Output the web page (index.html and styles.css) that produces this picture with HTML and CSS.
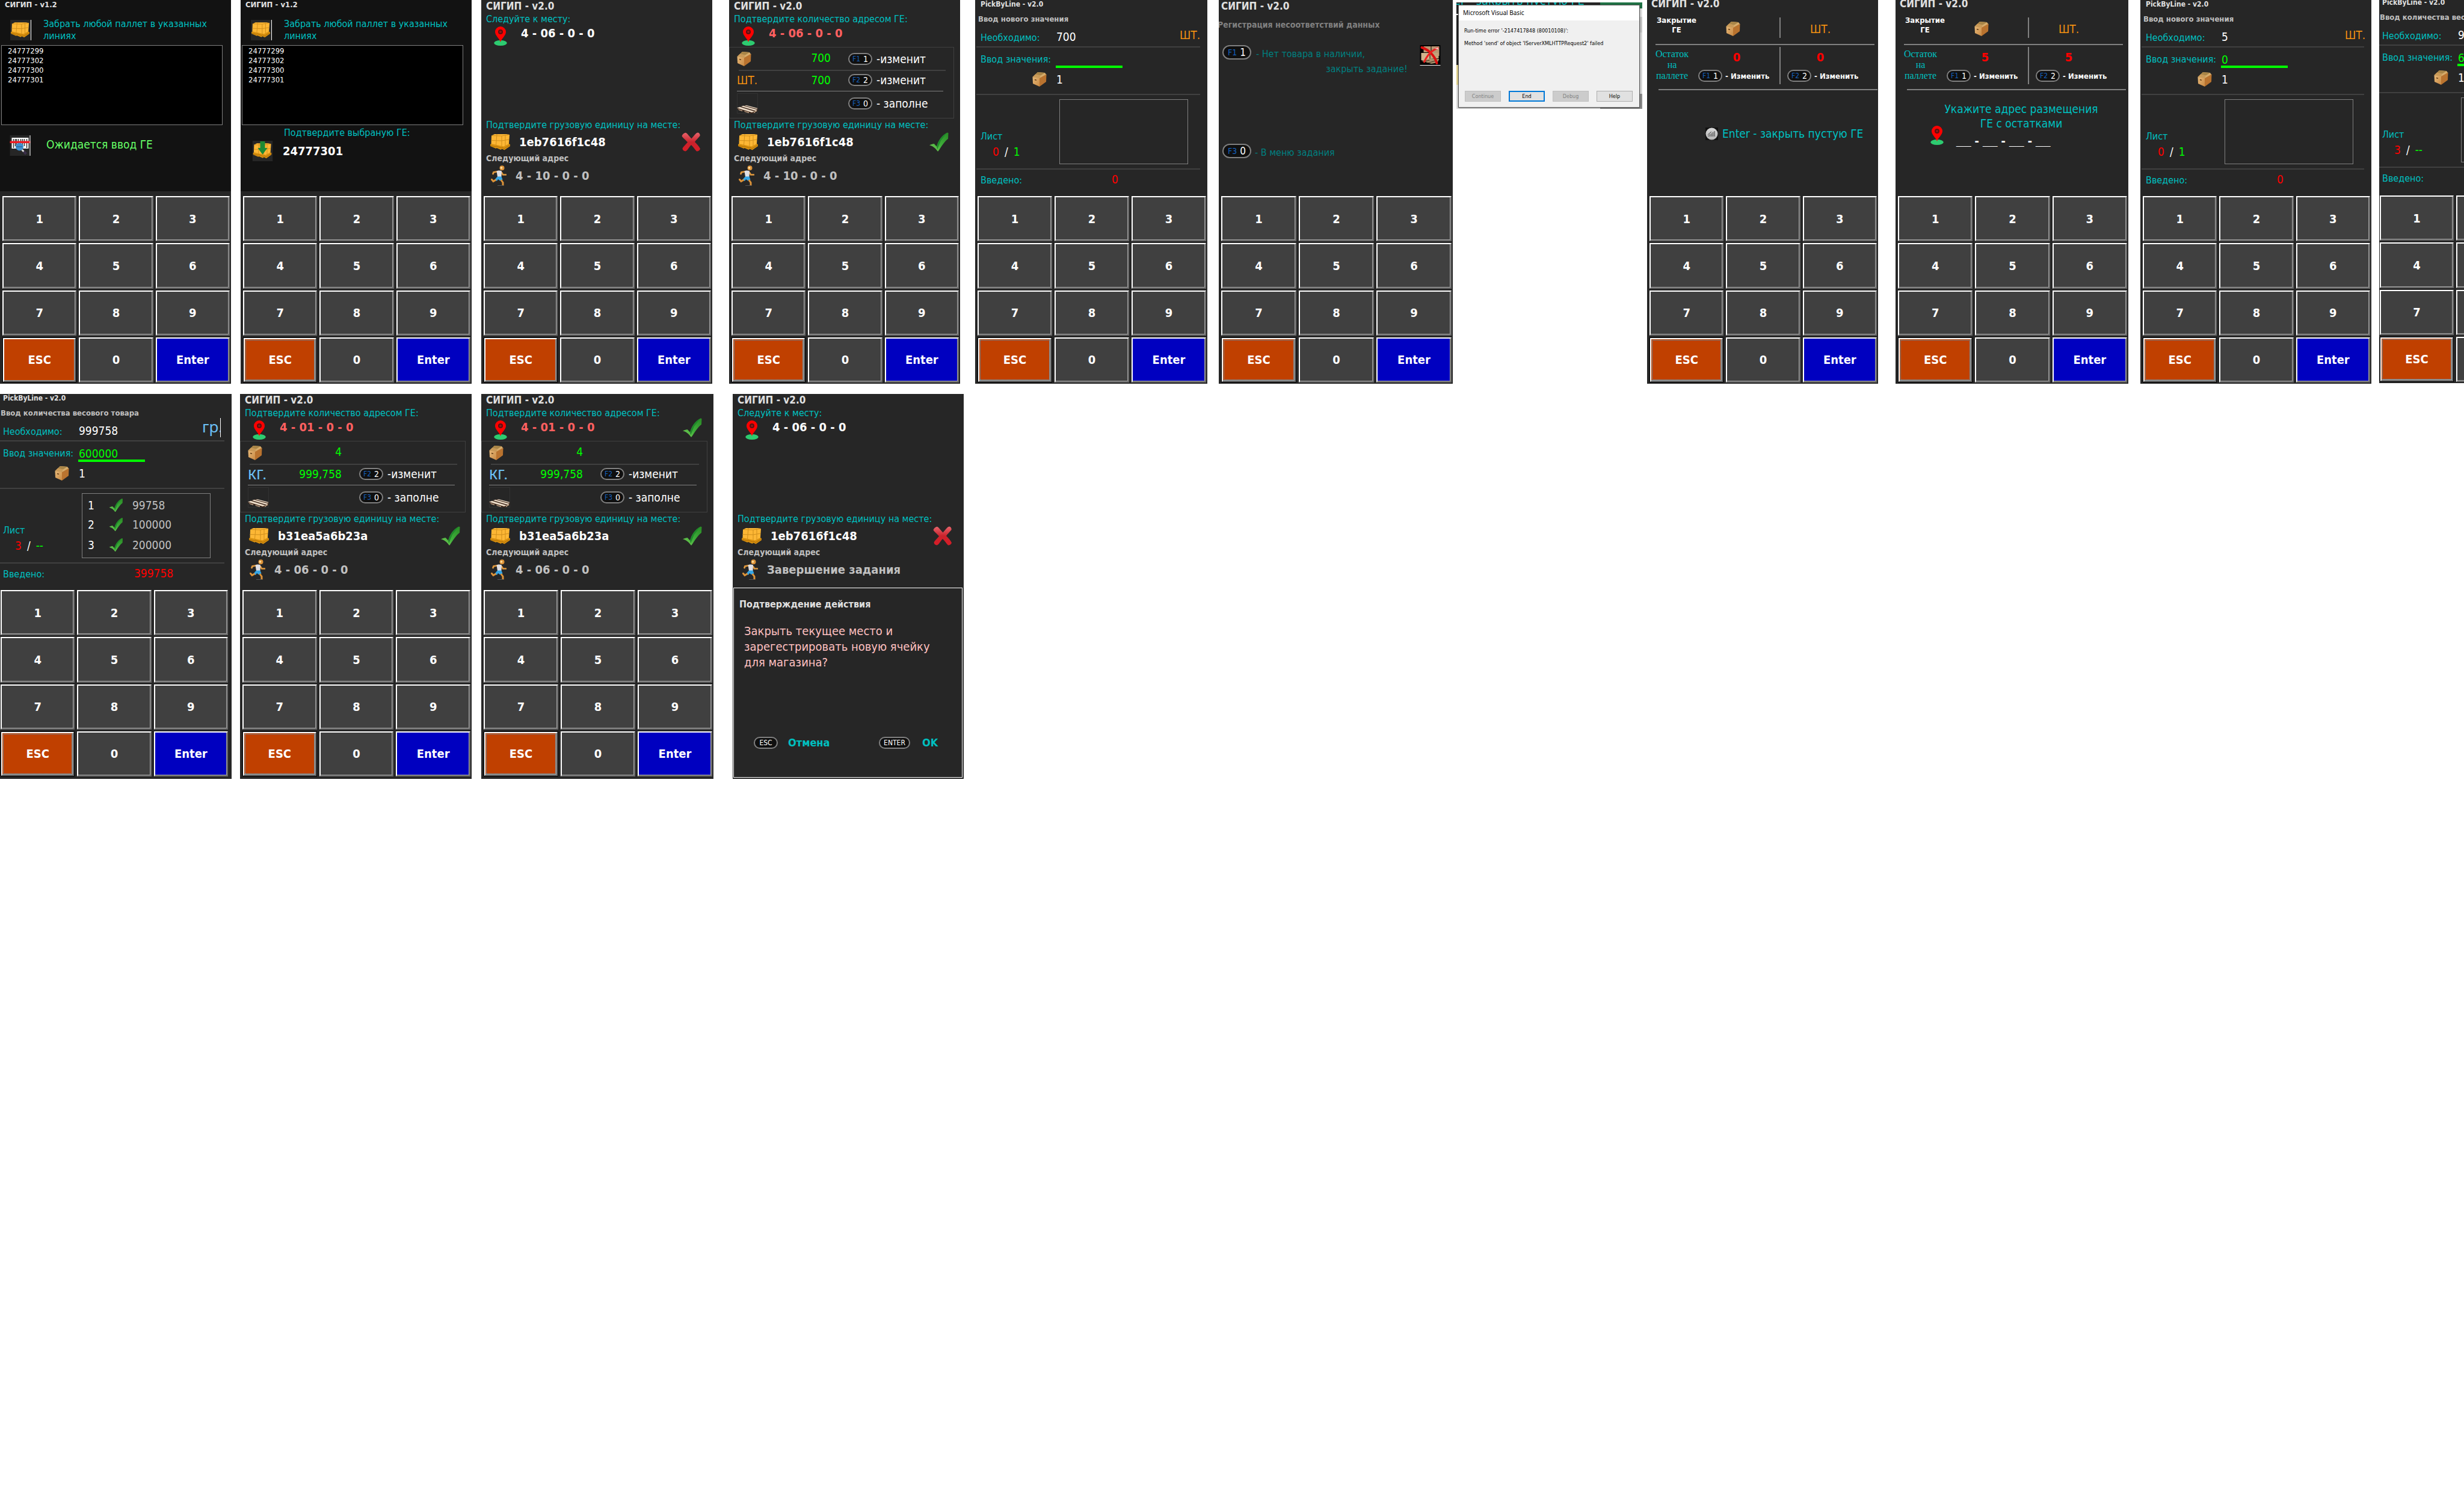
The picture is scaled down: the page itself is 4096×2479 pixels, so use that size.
FILE: index.html
```html
<!DOCTYPE html>
<html lang="ru">
<head>
<meta charset="utf-8">
<title>СИГИП — экраны терминала</title>
<link rel="stylesheet" href="styles.css">
</head>
<body>
<svg class="sprite" width="0" height="0" aria-hidden="true">
  <defs>
    <linearGradient id="g-check" x1="0" y1="1" x2="1" y2="0"><stop offset="0" stop-color="#7fd05a"/><stop offset=".45" stop-color="#3fae3a"/><stop offset="1" stop-color="#2a8a26"/></linearGradient>
    <linearGradient id="g-cross" x1="0" y1="0" x2="0" y2="1"><stop offset="0" stop-color="#e8646c"/><stop offset=".5" stop-color="#c9232c"/><stop offset="1" stop-color="#d81c26"/></linearGradient>
    <linearGradient id="g-box" x1="0" y1="0" x2="1" y2="1"><stop offset="0" stop-color="#e6b878"/><stop offset="1" stop-color="#c98a44"/></linearGradient>
    <linearGradient id="g-ball" x1="0" y1="0" x2="0" y2="1"><stop offset="0" stop-color="#d8d8d8"/><stop offset="1" stop-color="#b4b4b4"/></linearGradient>
    <symbol id="pin" viewBox="0 0 22 32">
      <ellipse cx="11" cy="27.500" rx="10.700" ry="4.500" fill="#2dcb70"/>
      <path d="M11 26C9.500 20.500 2 15 2 9a9 9 0 0 1 18 0c0 6-7.500 11.500-9 17z" fill="#fe0000"/>
      <circle cx="11" cy="9" r="4" fill="#5a1010"/><circle cx="11" cy="9" r="2" fill="#8e1c1c"/>
    </symbol>
    <symbol id="box" viewBox="0 0 24 24">
      <path d="M.500 8 9 0l12 1 2.500 3.500L12 12z" fill="#d6ac6c"/>
      <path d="M.500 8 12 10v14L1 19z" fill="url(#g-box)"/>
      <path d="M12 10 23.500 3.500 23 16l-11 8z" fill="#b9732f"/>
      <path d="M9 0 5 4l9 1.500L21 1z" fill="#a98547"/>
      <path d="M.500 8 5 3.500 14 5.500 12 10z" fill="#c99a58"/>
      <path d="M4 12.500l3 .800" stroke="#5a3510" stroke-width="1.300"/>
    </symbol>
    <symbol id="pallet" viewBox="0 0 33 27">
      <path d="M0 17l5-3 23 1 5 2v3l-9.500 6.500-4-2-2 1.500-7-3-1 1-9.500-4z" fill="#d9910f"/>
      <path d="M0 19l9 2 1-1 8 3 2-1 3 2 10-6" fill="none" stroke="#b06f06"/>
      <path d="M2 2.500 7 0h20l5 1-1 15-9 4.500L1.500 16z" fill="#fdb735"/>
      <path d="M2 2.500 19 3l12-2M19 3v17M1.500 10.500 19 11l12-2M11 0 9.500 18M25 1v18" fill="none" stroke="#d08f1c"/>
    </symbol>
    <symbol id="pallet-tile" viewBox="0 0 34 34">
      <path d="M0 0h34v34H0z" fill="#262626"/>
      <use href="#pallet" x="1" y="4" width="31" height="26"/>
    </symbol>
    <symbol id="pallet-down" viewBox="0 0 34 34">
      <use href="#pallet-tile" width="34" height="34"/>
      <path d="M13 1h8v11h4L17 23 9 12h4z" fill="#1c8a34"/>
    </symbol>
    <symbol id="wood" viewBox="0 0 35 34">
      <path d="M.500.500h34v33H.500z" fill="none" stroke="#323232"/>
      <path d="M0 24.500 13 20l21.500 5v4.500L25 34 1 26.500z" fill="#3a2317"/>
      <path d="M0 24.500 5 22.700l24 7.500L25 32zM7 22l3.500-1.200L34 27.500l-3 1.800zM12.500 20.300 16 20l18.500 5-1.500 1z" fill="#ecdcc8"/>
      <path d="M2 26.500l7 2v1.500l-6-2zM12 29.500l8 2v1.500l-7-2zM28 31l5-2.500v1.500l-5 3z" fill="#c9a98c"/>
    </symbol>
    <symbol id="check" viewBox="0 0 33 32">
      <path d="M0 21.500c3-1.500 6-2.500 8-2.500l4.500 5C15 14 21 5 30.500 0l2 .500-.500 10C26 15 21 23 15 32h-1C10 26 6 23.500 0 21.500z" fill="url(#g-check)"/>
      <path d="M12.500 24C15 14 21 5 30.500 0l-11 14-6 15z" fill="#1f8a2a"/>
    </symbol>
    <symbol id="cross" viewBox="0 0 31 32">
      <path d="M5 1c3-1.500 4 2 11 9.500C21 5 24 0 27 .500c3 1 3.500 4 3 5.500-3 4-7 7-8.500 10 3 3 7 7 9 11.500-1 3-4 4.500-6 4-3-3-6-8-9-10.500C12 24 10 30 6 31.500c-3-.500-5-2-5-5C3 23 7 20 9.500 16.500 6 12 1 9 0 6c1-2.500 3-4.500 5-5z" fill="url(#g-cross)"/>
    </symbol>
    <symbol id="runner" viewBox="0 0 26 34">
      <circle cx="18.500" cy="4.200" r="4" fill="#dc9238"/><circle cx="17.500" cy="4" r="1.800" fill="#ffe0a0"/>
      <path d="M12 10 4.500 11.500 3.500 14" fill="none" stroke="#e0993f" stroke-width="2.800" stroke-linecap="round"/>
      <path d="M18 12l2 3.500h5" fill="none" stroke="#e0993f" stroke-width="2.600" stroke-linecap="round"/>
      <path d="M9.500 9.500c3-1.500 6-1.500 8.500 0l-.500 9.500h-6.500z" fill="#dfdfe4"/>
      <path d="M11 18.500h6.500l2 5-4.500 2-3-2.500-2 3-4-2z" fill="#35a6e6"/>
      <path d="M7.500 24.500 4 26.500l-2.500-3M17.500 25l2.500 3.500V33" fill="none" stroke="#dc9238" stroke-width="3" stroke-linecap="round"/>
      <path d="M11 33.500h10" stroke="#555"/>
    </symbol>
    <symbol id="scan" viewBox="0 0 34 34">
      <path d="M0 0h34v34H0z" fill="#262626"/><path d="M3 4h28v18H3z" fill="#fff"/>
      <path d="M6 6v15M9 6v12M11 6v12M14 6v12M18 6v12M21 6v12M24 6v12M28 6v15" stroke="#333" stroke-width="1.500"/>
      <path d="M0 9.500h34v3.500H0z" fill="#ee1c24"/>
      <circle cx="16" cy="19" r="6.500" fill="#3d8fd0"/><path d="M11 19h10" stroke="#123" stroke-dasharray="1 1"/>
      <path d="M20 24l3 3" stroke="#ddd" stroke-width="3"/><path d="M23 27l4 4" stroke="#3b2f4a" stroke-width="4"/>
      <path d="M33.500 0v34" stroke="#fff"/>
    </symbol>
    <symbol id="no-stock" viewBox="0 0 34 34">
      <path d="M0 0h34v34H0z"/>
      <path d="M6 2h12v10H6zM19 2h13v16H19z" fill="#b99773"/><path d="M2 13h14v12H2z" fill="#d1b48d"/>
      <path d="M17 13h14v9H17z" fill="#c4a27a"/>
      <path d="M2 26l16-4 14 1-3 6-10 2z" fill="#a8906c"/><path d="M4 28l12-3M12 30l14-4" stroke="#3a2a18"/>
      <path d="M3 4c10 3 21 12 25 26" fill="none" stroke="#dd1010" stroke-width="4" stroke-linecap="round"/>
      <path d="M30 5C20 8 12 17 7 28" fill="none" stroke="#ee2020" stroke-width="3" stroke-linecap="round"/>
      <path d="M24 6l6-2 1 3z" fill="#fbd0d0"/>
      <path d="M0 33.500h34" stroke="#fff"/>
    </symbol>
    <symbol id="ball" viewBox="0 0 21 21">
      <path d="M0 0h21v21H0z" fill="#111"/><circle cx="10.500" cy="10.500" r="10" fill="url(#g-ball)"/>
      <path d="M5 15v-2M7.500 15v-4M10 15V9.500M12.500 15V7.500M15 15V6M4 12l6-5" fill="none" stroke="#333"/>
    </symbol>
  </defs>
</svg>

<main class="board">
  <div class="strip strip-top">

    <section class="screen">
      <div class="dark">
        <h2 class="title title-small">СИГИП - v1.2</h2>
        <div class="task"><svg class="i-tile lined"><use href="#pallet-tile"/></svg><p>Забрать любой паллет в указанных линиях</p></div>
        <ul class="codes"><li>24777299</li><li>24777302</li><li>24777300</li><li>24777301</li></ul>
        <div class="wait"><svg class="i-tile"><use href="#scan"/></svg><p>Ожидается ввод ГЕ</p></div>
      </div>
      <div class="keypad"><button>1</button><button>2</button><button>3</button><button>4</button><button>5</button><button>6</button><button>7</button><button>8</button><button>9</button><button class="esc">ESC</button><button>0</button><button class="enter">Enter</button></div>
    </section>

    <section class="screen">
      <div class="dark">
        <h2 class="title title-small">СИГИП - v1.2</h2>
        <div class="task"><svg class="i-tile lined"><use href="#pallet-tile"/></svg><p>Забрать любой паллет в указанных линиях</p></div>
        <ul class="codes"><li>24777299</li><li>24777302</li><li>24777300</li><li>24777301</li></ul>
        <p class="picked-label">Подтвердите выбраную ГЕ:</p>
        <div class="picked"><svg class="i-tile"><use href="#pallet-down"/></svg><strong class="big">24777301</strong></div>
      </div>
      <div class="keypad"><button>1</button><button>2</button><button>3</button><button>4</button><button>5</button><button>6</button><button>7</button><button>8</button><button>9</button><button class="esc focus">ESC</button><button>0</button><button class="enter">Enter</button></div>
    </section>

    <section class="screen">
      <h2 class="title">СИГИП - v2.0</h2>
      <p class="hint">Следуйте к месту:</p>
      <div class="address"><svg class="i-pin"><use href="#pin"/></svg><strong class="big">4 - 06 - 0 - 0</strong></div>
      <div class="blank"></div>
      <p class="hint unit-hint">Подтвердите грузовую единицу на месте:</p>
      <div class="unit"><svg class="i-pallet"><use href="#pallet"/></svg><strong class="big">1eb7616f1c48</strong><svg class="i-mark"><use href="#cross"/></svg></div>
      <p class="next-label">Следующий адрес</p>
      <div class="next"><svg class="i-run"><use href="#runner"/></svg><strong class="big">4 - 10 - 0 - 0</strong></div>
      <div class="keypad"><button>1</button><button>2</button><button>3</button><button>4</button><button>5</button><button>6</button><button>7</button><button>8</button><button>9</button><button class="esc">ESC</button><button>0</button><button class="enter">Enter</button></div>
    </section>

    <section class="screen">
      <h2 class="title">СИГИП - v2.0</h2>
      <p class="hint">Подтвердите количество адресом ГЕ:</p>
      <div class="address wrong"><svg class="i-pin"><use href="#pin"/></svg><strong class="big">4 - 06 - 0 - 0</strong></div>
      <div class="amounts">
        <div class="amount first"><svg class="i-box"><use href="#box"/></svg><span class="qty">700</span><button class="fkey"><b>F1</b>1</button><span class="act">-изменит</span></div>
        <hr class="dim">
        <div class="amount second"><span class="pcs">ШТ.</span><span class="qty">700</span><button class="fkey"><b>F2</b>2</button><span class="act">-изменит</span></div>
        <hr class="light">
        <div class="amount third"><svg class="i-wood"><use href="#wood"/></svg><span class="qty"></span><button class="fkey"><b>F3</b>0</button><span class="act">- заполне</span></div>
      </div>
      <p class="hint unit-hint">Подтвердите грузовую единицу на месте:</p>
      <div class="unit"><svg class="i-pallet"><use href="#pallet"/></svg><strong class="big">1eb7616f1c48</strong><svg class="i-mark"><use href="#check"/></svg></div>
      <p class="next-label">Следующий адрес</p>
      <div class="next"><svg class="i-run"><use href="#runner"/></svg><strong class="big">4 - 10 - 0 - 0</strong></div>
      <div class="keypad"><button>1</button><button>2</button><button>3</button><button>4</button><button>5</button><button>6</button><button>7</button><button>8</button><button>9</button><button class="esc focus">ESC</button><button>0</button><button class="enter">Enter</button></div>
    </section>

    <section class="screen">
      <div class="pick">
        <h2 class="pick-title">PickByLine - v2.0</h2>
        <p class="pick-sub">Ввод нового значения</p>
        <div class="need"><span>Необходимо:</span><span class="val">700</span><span class="pcs">ШТ.</span></div>
        <hr>
        <div class="entry"><label for="value-a">Ввод значения:</label><input id="value-a" type="text" value=""></div>
        <div class="boxes"><svg class="i-box"><use href="#box"/></svg><span>1</span></div>
        <hr>
        <div class="sheet"><div class="sheet-no"><span>Лист</span><p><span class="red">0</span> / <span class="lime">1</span></p></div><div class="frame"></div></div>
        <hr>
        <div class="total"><span>Введено:</span><span class="sum">0</span></div>
      </div>
      <div class="keypad"><button>1</button><button>2</button><button>3</button><button>4</button><button>5</button><button>6</button><button>7</button><button>8</button><button>9</button><button class="esc focus">ESC</button><button>0</button><button class="enter">Enter</button></div>
    </section>

    <section class="screen">
      <h2 class="title title-left">СИГИП - v2.0</h2>
      <p class="mismatch">Регистрация несоответствий данных</p>
      <div class="option"><button class="fkey large"><b>F1</b>1</button><p>- Нет товара в наличии,<span>закрыть задание!</span></p><svg class="i-tile"><use href="#no-stock"/></svg></div>
      <div class="option option-menu"><button class="fkey large"><b>F3</b>0</button><p>- В меню задания</p></div>
      <div class="keypad"><button>1</button><button>2</button><button>3</button><button>4</button><button>5</button><button>6</button><button>7</button><button>8</button><button>9</button><button class="esc focus">ESC</button><button>0</button><button class="enter">Enter</button></div>
    </section>

    <section class="desktop">
      <p class="behind">er - закрыть пустую ГЕ</p>
      <div class="msgbox">
        <h2>Microsoft Visual Basic</h2>
        <p>Run-time error '-2147417848 (80010108)':</p>
        <p>Method 'send' of object 'IServerXMLHTTPRequest2' failed</p>
        <div class="msg-buttons"><button disabled>Continue</button><button class="default">End</button><button disabled>Debug</button><button>Help</button></div>
      </div>
    </section>

    <section class="screen">
      <h2 class="title title-cut">СИГИП - v2.0</h2>
      <div class="close-head"><p>Закрытие<br>ГЕ</p><div class="cell ruled"><svg class="i-box"><use href="#box"/></svg></div><div class="cell"><span class="pcs">ШТ.</span></div></div>
      <hr class="close-line">
      <div class="rest"><p>Остаток<br>на<br>паллете</p>
        <div class="cell ruled"><strong>0</strong><div class="change"><button class="fkey"><b>F1</b>1</button><span>- Изменить</span></div></div>
        <div class="cell"><strong>0</strong><div class="change"><button class="fkey"><b>F2</b>2</button><span>- Изменить</span></div></div></div>
      <hr class="close-line late">
      <div class="close-empty"><svg class="i-ball"><use href="#ball"/></svg><span>Enter - закрыть пустую ГЕ</span></div>
      <div class="keypad"><button>1</button><button>2</button><button>3</button><button>4</button><button>5</button><button>6</button><button>7</button><button>8</button><button>9</button><button class="esc focus">ESC</button><button>0</button><button class="enter">Enter</button></div>
    </section>

    <section class="screen">
      <h2 class="title title-cut">СИГИП - v2.0</h2>
      <div class="close-head"><p>Закрытие<br>ГЕ</p><div class="cell ruled"><svg class="i-box"><use href="#box"/></svg></div><div class="cell"><span class="pcs">ШТ.</span></div></div>
      <hr class="close-line">
      <div class="rest"><p>Остаток<br>на<br>паллете</p>
        <div class="cell ruled"><strong>5</strong><div class="change"><button class="fkey"><b>F1</b>1</button><span>- Изменить</span></div></div>
        <div class="cell"><strong>5</strong><div class="change"><button class="fkey"><b>F2</b>2</button><span>- Изменить</span></div></div></div>
      <hr class="close-line late">
      <div class="place"><svg class="i-pin"><use href="#pin"/></svg><div><p>Укажите адрес размещения<br>ГЕ с остатками</p><strong>__ - __ - __ - __</strong></div></div>
      <div class="keypad"><button>1</button><button>2</button><button>3</button><button>4</button><button>5</button><button>6</button><button>7</button><button>8</button><button>9</button><button class="esc focus">ESC</button><button>0</button><button class="enter">Enter</button></div>
    </section>

    <section class="screen">
      <div class="pick">
        <h2 class="pick-title">PickByLine - v2.0</h2>
        <p class="pick-sub">Ввод нового значения</p>
        <div class="need"><span>Необходимо:</span><span class="val">5</span><span class="pcs">ШТ.</span></div>
        <hr>
        <div class="entry"><label for="value-b">Ввод значения:</label><input id="value-b" type="text" value="0"></div>
        <div class="boxes"><svg class="i-box"><use href="#box"/></svg><span>1</span></div>
        <hr>
        <div class="sheet"><div class="sheet-no"><span>Лист</span><p><span class="red">0</span> / <span class="lime">1</span></p></div><div class="frame"></div></div>
        <hr>
        <div class="total"><span>Введено:</span><span class="sum">0</span></div>
      </div>
      <div class="keypad"><button>1</button><button>2</button><button>3</button><button>4</button><button>5</button><button>6</button><button>7</button><button>8</button><button>9</button><button class="esc focus">ESC</button><button>0</button><button class="enter">Enter</button></div>
    </section>

    <section class="screen raised">
      <div class="pick weight">
        <h2 class="pick-title">PickByLine - v2.0</h2>
        <p class="pick-sub">Ввод количества весового товара</p>
        <div class="need"><span>Необходимо:</span><span class="val">999758</span><span class="gram">гр.</span></div>
        <hr>
        <div class="entry"><label for="value-c">Ввод значения:</label><input id="value-c" type="text" value="600000"></div>
        <div class="boxes"><svg class="i-box"><use href="#box"/></svg><span>1</span></div>
        <hr>
        <div class="sheet"><div class="sheet-no"><span>Лист</span><p><span class="red">3</span> / <span class="lime">--</span></p></div><div class="frame"></div></div>
        <hr>
        <div class="total"><span>Введено:</span><span class="sum">399758</span></div>
      </div>
      <div class="keypad"><button>1</button><button>2</button><button>3</button><button>4</button><button>5</button><button>6</button><button>7</button><button>8</button><button>9</button><button class="esc focus">ESC</button><button>0</button><button class="enter">Enter</button></div>
    </section>
  </div>

  <div class="strip strip-bottom">
    <section class="screen">
      <div class="pick weight">
        <h2 class="pick-title">PickByLine - v2.0</h2>
        <p class="pick-sub">Ввод количества весового товара</p>
        <div class="need"><span>Необходимо:</span><span class="val">999758</span><span class="gram">гр.</span></div>
        <hr>
        <div class="entry"><label for="value-d">Ввод значения:</label><input id="value-d" type="text" value="600000"></div>
        <div class="boxes"><svg class="i-box"><use href="#box"/></svg><span>1</span></div>
        <hr>
        <div class="sheet"><div class="sheet-no"><span>Лист</span><p><span class="red">3</span> / <span class="lime">--</span></p></div>
          <div class="frame"><span>1</span><svg><use href="#check"/></svg><em>99758</em><span>2</span><svg><use href="#check"/></svg><em>100000</em><span>3</span><svg><use href="#check"/></svg><em>200000</em></div></div>
        <hr>
        <div class="total"><span>Введено:</span><span class="sum">399758</span></div>
      </div>
      <div class="keypad"><button>1</button><button>2</button><button>3</button><button>4</button><button>5</button><button>6</button><button>7</button><button>8</button><button>9</button><button class="esc focus">ESC</button><button>0</button><button class="enter">Enter</button></div>
    </section>

    <section class="screen">
      <h2 class="title">СИГИП - v2.0</h2>
      <p class="hint">Подтвердите количество адресом ГЕ:</p>
      <div class="address wrong"><svg class="i-pin"><use href="#pin"/></svg><strong class="big">4 - 01 - 0 - 0</strong></div>
      <div class="amounts">
        <div class="amount first"><svg class="i-box"><use href="#box"/></svg><span class="qty">4</span></div>
        <hr class="dim">
        <div class="amount second"><span class="kg">КГ.</span><span class="qty">999,758</span><button class="fkey"><b>F2</b>2</button><span class="act">-изменит</span></div>
        <hr class="light">
        <div class="amount third"><svg class="i-wood"><use href="#wood"/></svg><span class="qty"></span><button class="fkey"><b>F3</b>0</button><span class="act">- заполне</span></div>
      </div>
      <p class="hint unit-hint">Подтвердите грузовую единицу на месте:</p>
      <div class="unit"><svg class="i-pallet"><use href="#pallet"/></svg><strong class="big">b31ea5a6b23a</strong><svg class="i-mark"><use href="#check"/></svg></div>
      <p class="next-label">Следующий адрес</p>
      <div class="next"><svg class="i-run"><use href="#runner"/></svg><strong class="big">4 - 06 - 0 - 0</strong></div>
      <div class="keypad"><button>1</button><button>2</button><button>3</button><button>4</button><button>5</button><button>6</button><button>7</button><button>8</button><button>9</button><button class="esc focus">ESC</button><button>0</button><button class="enter">Enter</button></div>
    </section>

    <section class="screen">
      <h2 class="title">СИГИП - v2.0</h2>
      <p class="hint">Подтвердите количество адресом ГЕ:</p>
      <div class="address wrong"><svg class="i-pin"><use href="#pin"/></svg><strong class="big">4 - 01 - 0 - 0</strong><svg class="i-mark"><use href="#check"/></svg></div>
      <div class="amounts">
        <div class="amount first"><svg class="i-box"><use href="#box"/></svg><span class="qty">4</span></div>
        <hr class="dim">
        <div class="amount second"><span class="kg">КГ.</span><span class="qty">999,758</span><button class="fkey"><b>F2</b>2</button><span class="act">-изменит</span></div>
        <hr class="light">
        <div class="amount third"><svg class="i-wood"><use href="#wood"/></svg><span class="qty"></span><button class="fkey"><b>F3</b>0</button><span class="act">- заполне</span></div>
      </div>
      <p class="hint unit-hint">Подтвердите грузовую единицу на месте:</p>
      <div class="unit"><svg class="i-pallet"><use href="#pallet"/></svg><strong class="big">b31ea5a6b23a</strong><svg class="i-mark"><use href="#check"/></svg></div>
      <p class="next-label">Следующий адрес</p>
      <div class="next"><svg class="i-run"><use href="#runner"/></svg><strong class="big">4 - 06 - 0 - 0</strong></div>
      <div class="keypad"><button>1</button><button>2</button><button>3</button><button>4</button><button>5</button><button>6</button><button>7</button><button>8</button><button>9</button><button class="esc focus">ESC</button><button>0</button><button class="enter">Enter</button></div>
    </section>

    <section class="screen">
      <h2 class="title">СИГИП - v2.0</h2>
      <p class="hint">Следуйте к месту:</p>
      <div class="address"><svg class="i-pin"><use href="#pin"/></svg><strong class="big">4 - 06 - 0 - 0</strong></div>
      <div class="blank"></div>
      <p class="hint unit-hint">Подтвердите грузовую единицу на месте:</p>
      <div class="unit"><svg class="i-pallet"><use href="#pallet"/></svg><strong class="big">1eb7616f1c48</strong><svg class="i-mark"><use href="#cross"/></svg></div>
      <p class="next-label">Следующий адрес</p>
      <div class="next"><svg class="i-run"><use href="#runner"/></svg><strong class="big">Завершение задания</strong></div>
      <div class="confirm">
        <h3>Подтверждение действия</h3>
        <p>Закрыть текущее место и зарегестрировать новую ячейку для магазина?</p>
        <div class="answers"><button class="fkey">ESC</button><span>Отмена</span><button class="fkey wide">ENTER</button><span>OK</span></div>
      </div>
    </section>
  </div>
</main>
</body>
</html>
```
FILE: styles.css
```css
* { box-sizing: border-box; }
body, h2, h3, p, ul { margin: 0; padding: 0; }
body {
  background: #fff;
  overflow-x: hidden;
  font-family: "DejaVu Sans Condensed", "DejaVu Sans", "Noto Sans", sans-serif;
  font-size: 16px;
}
button { font-family: inherit; padding: 0; margin: 0; }
svg { display: block; flex: none; }
.sprite { position: absolute; }

.board { display: grid; gap: 15px; }
.strip { display: flex; align-items: flex-start; overflow: hidden; height: 640px; }
.strip-top { gap: 16px; }
.strip-bottom { gap: 14px; }

/* one handheld screen */
.screen {
  flex: none;
  width: 384px;
  height: 638px;
  display: flex;
  flex-direction: column;
  overflow: hidden;
  background: #262626;
  color: #fff;
}
.strip-top .screen:nth-child(4) { margin-left: 12px; }
.strip-top .screen:nth-child(5) { margin-left: 9px; width: 386px; }
.strip-top .screen:nth-child(6) { margin-left: 3px; width: 389px; }
.desktop { margin-left: -10px; }
.strip-top .screen:nth-child(8) { margin-left: -8px; }
.strip-top .screen:nth-child(9) { margin-left: 13px; width: 387px; }
.strip-top .screen:nth-child(10) { margin-left: 4px; }
.strip-top .screen:nth-child(11) { margin-left: -3px; }
.strip-top .raised { margin-top: -3px; height: 640px; }
.strip-bottom .screen { width: 385px; height: 640px; padding-bottom: 2px; }
.strip-bottom .screen:nth-child(3) { margin-left: 2px; width: 386px; }
.strip-bottom .screen:nth-child(4) { margin-left: 18px; width: 384px; }

/* icons */
.i-tile { width: 35px; height: 34px; }
.i-tile.lined { border-right: 1px solid #fff; }
.i-pin { width: 22px; height: 32px; }
.i-box { width: 24px; height: 24px; }
.i-pallet { width: 33px; height: 27px; }
.i-wood { width: 35px; height: 34px; }
.i-mark { width: 32px; height: 32px; }
.i-run { width: 26px; height: 34px; }
.i-ball { width: 21px; height: 21px; }

/* shared text */
.title { font-size: 17px; line-height: 20px; padding-left: 8px; color: #e0e0e0; }
.title-small { font-size: 13px; line-height: 16px; }
.title-left { padding-left: 4px; }
.title-cut { padding-left: 7px; line-height: 12px; }
.hint { font-size: 16px; line-height: 24px; padding-left: 8px; color: #00c0c0; white-space: nowrap; }
.unit-hint { line-height: 22px; }
.big { font-size: 20px; line-height: 22px; }
.pcs { font-size: 19px; line-height: 16px; color: #f29111; }
.red { color: #f00; }
.lime { color: #0f0; }

/* keypad */
.keypad {
  flex: none;
  height: 310px;
  margin: auto 2px 2px 4px;
  display: grid;
  grid-template: repeat(4, 1fr) / repeat(3, 1fr);
  gap: 3px 4px;
}
.keypad button {
  border: 2px solid;
  border-color: #fff #696969 #696969 #fff;
  box-shadow: inset -1px -1px #a0a0a0;
  background: #404040;
  color: #fff;
  font-size: 20px;
  font-weight: bold;
}
.keypad .esc { background: #c04000; outline: 1px solid #000; outline-offset: -1px; border-width: 3px; }
.keypad .focus { background: #c04000 padding-box; position: relative; }
.keypad .focus::after { content: ""; position: absolute; inset: 1px; border: 1px dotted #3fbfff; }
.keypad .enter { background: #0000c0; }
.weight + .keypad { margin-left: 1px; margin-right: 6px; }

/* function key badge */
.fkey {
  width: 40px;
  height: 20px;
  border: 2px solid #808080;
  border-radius: 10px;
  background: #0f0f0f;
  color: #fff;
  font-size: 14px;
  line-height: 16px;
  display: flex;
  justify-content: center;
  align-items: center;
  gap: 5px;
}
.fkey b { font-size: 12px; font-weight: normal; color: #1560bd; }
.fkey.large { width: 48px; height: 24px; border-radius: 12px; font-size: 17px; flex: none; }
.fkey.large b { font-size: 14px; }
.fkey.wide { width: 52px; }

/* unit selection */
.dark { height: 318px; background: #121212; }
.task { display: flex; align-items: flex-start; gap: 20px; margin-top: 14px; padding-left: 17px; height: 45px; }
.task svg { margin-top: 3px; }
.task p { width: 290px; line-height: 20px; color: #00c0c0; }
.codes {
  list-style: none;
  height: 133px;
  margin: 0 14px 0 2px;
  padding: 1px 0 0 10px;
  border: 1px solid #808080;
  background: #000;
  font-size: 13px;
  line-height: 16px;
}
.wait { display: flex; gap: 26px; margin-top: 17px; padding-left: 16px; color: #6f6; font-size: 19px; line-height: 30px; }
.picked-label { line-height: 22px; margin-top: 2px; padding-left: 72px; color: #00c0c0; }
.picked { display: flex; align-items: center; gap: 16px; margin-top: 2px; padding-left: 19px; }

/* address and unit check */
.address { display: flex; gap: 23px; height: 34px; padding-left: 21px; }
.address.wrong { color: #ff6060; }
.address .i-mark, .unit .i-mark { margin-left: auto; margin-right: 19px; }
.address .i-mark { margin-top: -4px; }
.blank { height: 119px; }
.unit { display: flex; align-items: center; gap: 15px; height: 34px; padding-left: 15px; }
.next-label { font-size: 14px; font-weight: bold; line-height: 20px; padding-left: 8px; color: #c0c0c0; }
.next { display: flex; align-items: center; gap: 15px; height: 40px; padding: 0 0 2px 16px; color: #c0c0c0; }

.amounts { height: 119px; margin-right: 10px; border: 1px solid #404040; }
.amounts hr { margin: 0; border: 0; }
.amounts .dim { height: 2px; margin: 0 13px 0 15px; background: #404040; }
.amounts .light { height: 1px; margin: 0 17px 0 12px; background: #808080; }
.amount { display: grid; grid-template-columns: 36px 120px 69px 1fr; align-items: center; padding-left: 12px; }
.amount.first { height: 37px; }
.amount.first .qty { padding-bottom: 3px; }
.amount.second { height: 33px; padding-bottom: 3px; }
.amount.third { height: 44px; padding-bottom: 4px; }
.qty { font-size: 19px; line-height: 20px; text-align: right; color: #0f0; }
.amount .fkey { justify-self: end; }
.act { padding-left: 7px; font-size: 19px; line-height: 20px; white-space: nowrap; }
.kg { font-family: "Noto Sans", sans-serif; font-size: 22px; font-weight: 500; line-height: 24px; color: #6cc0f5; }

/* quantity entry */
.pick { color: #00c0c0; }
.pick.weight { margin-left: -4px; }
.pick-title { font-size: 12px; line-height: 14px; padding-left: 9px; color: #e0e0e0; }
.pick-sub { font-size: 13px; font-weight: bold; line-height: 36px; padding-left: 5px; color: #c0c0c0; }
.pick hr { height: 2px; margin: 0 12px 0 2px; border: 0; background: #404040; }
.need { display: grid; grid-template-columns: 126px 205px 1fr; align-items: baseline; height: 27px; padding-left: 9px; line-height: 23px; }
.need .val { font-size: 19px; color: #fff; }
.need .pcs { align-self: start; line-height: 16px; }
.gram {
  align-self: start;
  width: 31px;
  height: 32px;
  margin-top: -10px;
  border-right: 1px solid #fff;
  overflow: hidden;
  font: 26px/28px "Noto Sans", sans-serif;
  color: #6cc0f5;
}
.entry { display: flex; height: 34px; padding-left: 9px; }
.entry label { width: 125px; padding-top: 6px; line-height: 28px; }
.entry input {
  width: 111px;
  height: 34px;
  padding: 10px 0 0 1px;
  border: 0;
  border-bottom: 4px solid #0f0;
  outline: 0;
  background: none;
  color: #0f0;
  font: 19px/20px "DejaVu Sans Condensed", "DejaVu Sans", sans-serif;
}
.boxes { display: flex; align-items: center; gap: 16px; height: 43px; padding: 0 0 5px 95px; font-size: 19px; color: #fff; }
.sheet { display: grid; grid-template-columns: 140px 214px; height: 122px; }
.sheet-no { display: flex; flex-direction: column; justify-content: flex-end; padding: 0 0 14px 9px; line-height: 22px; }
.sheet-no p { display: flex; gap: 9px; padding-left: 20px; font-size: 19px; line-height: 28px; color: #fff; }
.frame {
  height: 108px;
  margin-top: 7px;
  border: 1px solid #808080;
  display: grid;
  grid-template: 38px 26px 42px / 35px 39px 1fr;
  align-items: center;
  padding-left: 9px;
  font-size: 19px;
  color: #fff;
}
.frame svg { width: 24px; height: 22px; }
.frame em { font-style: normal; color: #c0c0c0; }
.total { display: grid; grid-template-columns: 218px 1fr; align-items: baseline; padding-left: 9px; line-height: 32px; }
.sum { font-size: 19px; color: #f00; }

/* mismatch menu */
.mismatch { margin-left: -2px; font-size: 14px; font-weight: bold; line-height: 42px; color: #808080; white-space: nowrap; }
.option { display: flex; align-items: flex-start; gap: 8px; height: 164px; padding: 13px 20px 0 6px; color: #008080; }
.option p { flex: 1; line-height: 25px; white-space: nowrap; padding-top: 2px; }
.option span { display: block; padding-left: 116px; }
.option-menu { height: 50px; gap: 6px; }

/* closing a unit */
.close-head { display: grid; grid-template-columns: 98px 124px 1fr; height: 61px; }
.close-head p { padding-top: 14px; text-align: center; font-size: 13px; font-weight: bold; line-height: 16px; }
.close-head .cell { display: flex; align-items: center; margin: 17px 0 10px; padding: 3px 0 0 33px; }
.close-head .cell:last-child { padding-left: 49px; }
.ruled { border-right: 2px solid #808080; }
.close-line { flex: none; width: 364px; height: 2px; margin: 0 0 0 14px; border: 0; background: #808080; }
.close-line.late { margin-left: 19px; }
.rest { display: grid; grid-template-columns: 83px 139px 1fr; height: 73px; }
.rest p { padding-top: 6px; text-align: center; font: 16px/18px "Liberation Serif", serif; color: #00c0c0; }
.rest .cell { margin: 3px 0 9px; padding-left: 2px; }
.rest .cell:last-child { padding-left: 11px; }
.rest strong { display: block; width: 128px; padding-right: 18px; text-align: center; font-size: 20px; line-height: 34px; color: #f00; }
.rest .cell.ruled strong { padding-right: 0; }
.change { display: flex; align-items: center; gap: 5px; height: 28px; font-size: 13px; font-weight: bold; white-space: nowrap; }
.close-empty { display: flex; align-items: center; gap: 7px; height: 24px; margin-top: 60px; padding-left: 97px; font-size: 19px; color: #00c0c0; white-space: nowrap; }
.place { display: flex; align-items: flex-end; margin-top: 19px; padding-left: 58px; }
.place .i-pin { margin-bottom: 10px; }
.place p { width: 258px; text-align: center; font-size: 19px; line-height: 24px; color: #00c0c0; white-space: nowrap; }
.place strong { display: block; padding-left: 21px; font: bold 22px/34px "Liberation Sans", sans-serif; }

/* runtime error window over a spreadsheet */
.desktop {
  flex: none;
  width: 309px;
  height: 177px;
  margin-top: 4px;
  padding: 0 4px 2px 3px;
  overflow: hidden;
  background:
    linear-gradient(#217346, #217346) right top / 70px 10px no-repeat,
    linear-gradient(#e4e4e4 0 14px, #c9c9c9 14px 40px, #dcdcdc 40px 142px, #8e8e8e 142px) right 10px / 5px 167px no-repeat,
    linear-gradient(#8e8e8e, #8e8e8e) right bottom / 70px 3px no-repeat,
    linear-gradient(#262626 0 19px, #fff 19px 21px, #262626 21px 104px, #e8d890 104px 137px, #e4e4e4 137px) left top / 239px 177px no-repeat;
}
.behind { height: 4px; overflow: hidden; margin-left: -7px; display: flex; align-items: flex-end; font-size: 20px; line-height: 14px; color: #00c0c0; white-space: nowrap; }
.msgbox { height: 171px; border: 1px solid #5a5a5a; background: #f0f0f0; color: #000; font-size: 9px; box-shadow: 0 1px 3px #0006; }
.msgbox h2 { height: 25px; padding-left: 7px; background: #fff; font: 10px/24px "Noto Sans", sans-serif; }
.msgbox p { padding-left: 9px; line-height: 21px; white-space: nowrap; }
.msgbox h2 + p { margin-top: 7px; }
.msg-buttons { display: grid; grid-template-columns: repeat(4, 60px); gap: 13px; margin-top: 68px; padding-left: 10px; }
.msg-buttons button { height: 18px; border: 1px solid #adadad; background: #e1e1e1; font-size: 9px; color: #000; }
.msg-buttons button:disabled { border-color: #bfbfbf; background: #ccc; color: #838383; }
.msg-buttons .default { border: 2px solid #0078d7; }

/* confirmation */
.confirm { height: 316px; margin: auto 2px 0 1px; padding: 16px 16px 0 9px; border: 1px solid #fff; }
.confirm h3 { font-size: 16px; line-height: 22px; color: #e0e0e0; }
.confirm p { width: 350px; padding: 20px 0 0 8px; font-size: 20px; line-height: 26px; color: #ffc0c0; }
.answers { display: grid; grid-template-columns: 40px 134px 52px 1fr; column-gap: 17px; align-items: center; margin-top: 110px; padding-left: 24px; font-size: 18px; font-weight: bold; color: #00c0c0; }
.answers .fkey { font-size: 12px; }
.answers span:last-child { padding-left: 3px; }
```
